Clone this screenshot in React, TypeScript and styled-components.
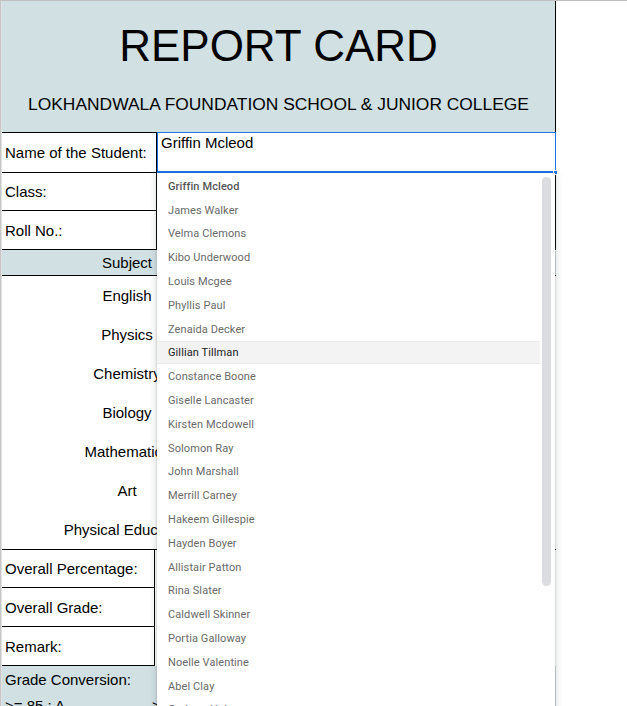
import React from "react";
import styled, { createGlobalStyle } from "styled-components";

const GlobalStyle = createGlobalStyle`
  html, body {
    margin: 0;
    padding: 0;
    background: #ffffff;
    overflow: hidden;
  }
  * {
    box-sizing: border-box;
  }
`;

const students = [
  "Griffin Mcleod",
  "James Walker",
  "Velma Clemons",
  "Kibo Underwood",
  "Louis Mcgee",
  "Phyllis Paul",
  "Zenaida Decker",
  "Gillian Tillman",
  "Constance Boone",
  "Giselle Lancaster",
  "Kirsten Mcdowell",
  "Solomon Ray",
  "John Marshall",
  "Merrill Carney",
  "Hakeem Gillespie",
  "Hayden Boyer",
  "Allistair Patton",
  "Rina Slater",
  "Caldwell Skinner",
  "Portia Galloway",
  "Noelle Valentine",
  "Abel Clay",
  "Graham Hale",
];

const subjects = [
  "English",
  "Physics",
  "Chemistry",
  "Biology",
  "Mathematics",
  "Art",
  "Physical Education",
];

const teal = "#d0e0e3";

const Page = styled.div`
  width: 627px;
  height: 706px;
  overflow: hidden;
  display: flex;
  align-items: flex-start;
  border-top: 1px solid #c0c0c0;
  font-family: "Liberation Sans", Arial, sans-serif;
  color: #000;
`;

const Gutter = styled.div`
  flex: none;
  align-self: stretch;
  width: 2px;
  background: #c6c6c6;
  border-right: 1px solid #e2e2e2;
`;

const Sheet = styled.div`
  position: relative;
  flex: none;
  width: 554px;
`;

const Header = styled.div`
  height: 131px;
  background: ${teal};
  border-right: 1px solid #000;
  display: flex;
  flex-direction: column;
  align-items: center;
  padding-top: 20px;
`;

const Title = styled.div`
  font-size: 44px;
  line-height: 50px;
  white-space: nowrap;
`;

const Subtitle = styled.div`
  margin-top: 24px;
  font-size: 17.4px;
  line-height: 19px;
  white-space: nowrap;
`;

const InfoRow = styled.div<{ $h: number; $first?: boolean }>`
  display: grid;
  grid-template-columns: 155px 399px;
  height: ${(p) => p.$h}px;
  border-top: ${(p) => (p.$first ? "1px solid #000" : "none")};
`;

const LabelCell = styled.div`
  display: flex;
  align-items: center;
  padding-left: 3px;
  font-size: 15px;
  white-space: nowrap;
  overflow: hidden;
  border-right: 1px solid #000;
  border-bottom: 1px solid #000;
`;

const ValueCell = styled.div`
  border-bottom: 1px solid #000;
  border-right: 1px solid #000;
`;

const SelectedCell = styled.div`
  position: relative;
  margin-top: -1px;
  border: 1px solid #1a73e8;
  border-bottom-width: 2px;
  padding: 1px 0 0 3px;
  font-size: 15px;
  line-height: 18px;
  background: #fff;
`;

const Handle = styled.span`
  position: absolute;
  right: -3px;
  bottom: -4px;
  width: 5px;
  height: 5px;
  background: #1a73e8;
  border: 1px solid #fff;
`;

const SubjectHead = styled.div`
  height: 26px;
  background: ${teal};
  border-bottom: 1px solid #000;
  display: grid;
  grid-template-columns: 250px 1fr;
  font-size: 15px;
  align-items: center;
  text-align: center;
`;

const SubjectRow = styled.div`
  height: 39px;
  display: grid;
  grid-template-columns: 250px 1fr;
  align-items: center;
  text-align: center;
  font-size: 15px;
  white-space: nowrap;
  padding-bottom: 1px;
`;

const SummaryRow = styled.div<{ $first?: boolean }>`
  display: grid;
  grid-template-columns: 153px 1fr;
  height: 39px;
  border-top: ${(p) => (p.$first ? "1px solid #000" : "none")};
`;

const GradeRow = styled.div<{ $h: number }>`
  height: ${(p) => p.$h}px;
  background: ${teal};
  display: grid;
  grid-template-columns: 147px 1fr;
  align-items: center;
  font-size: 15px;
  white-space: nowrap;
  padding-left: 3px;
`;

const Dropdown = styled.div`
  position: absolute;
  left: 155px;
  top: 172px;
  width: 398px;
  height: 560px;
  background: #fff;
  padding-top: 1px;
  box-shadow: 0 2px 6px 2px rgba(60, 64, 67, 0.15),
    0 1px 2px rgba(60, 64, 67, 0.3);
  font-family: Roboto, "Noto Sans", sans-serif;
  overflow: hidden;
`;

const Option = styled.div<{ $active?: boolean; $current?: boolean }>`
  width: 383px;
  height: 23.8px;
  display: flex;
  align-items: center;
  padding-left: 11px;
  padding-top: 1px;
  font-size: 11px;
  letter-spacing: 0.1px;
  white-space: nowrap;
  color: ${(p) => (p.$active ? "#202124" : p.$current ? "#555" : "#6a6a6a")};
  font-weight: ${(p) => (p.$current ? 500 : 400)};
  background: ${(p) => (p.$active ? "#f3f3f3" : "transparent")};
  box-shadow: ${(p) =>
    p.$active ? "inset 0 1px 0 #e9e9e9, inset 0 -1px 0 #e9e9e9" : "none"};
`;

const Scrollbar = styled.div`
  position: absolute;
  right: 4px;
  top: 4px;
  width: 9px;
  height: 409px;
  border-radius: 5px;
  background: #dadce0;
`;

export default function App() {
  return (
    <>
      <GlobalStyle />
      <Page>
        <Gutter />
        <Sheet>
          <Header>
            <Title>REPORT CARD</Title>
            <Subtitle>LOKHANDWALA FOUNDATION SCHOOL &amp; JUNIOR COLLEGE</Subtitle>
          </Header>

          <InfoRow $h={41} $first>
            <LabelCell>Name of the Student:</LabelCell>
            <SelectedCell>
              Griffin Mcleod
              <Handle />
            </SelectedCell>
          </InfoRow>
          <InfoRow $h={38}>
            <LabelCell>Class:</LabelCell>
            <ValueCell />
          </InfoRow>
          <InfoRow $h={39}>
            <LabelCell>Roll No.:</LabelCell>
            <ValueCell />
          </InfoRow>

          <SubjectHead>
            <span>Subject</span>
            <span />
          </SubjectHead>
          {subjects.map((s) => (
            <SubjectRow key={s}>
              <span>{s}</span>
              <span />
            </SubjectRow>
          ))}

          <SummaryRow $first>
            <LabelCell>Overall Percentage:</LabelCell>
            <span />
          </SummaryRow>
          <SummaryRow>
            <LabelCell>Overall Grade:</LabelCell>
            <span />
          </SummaryRow>
          <SummaryRow>
            <LabelCell>Remark:</LabelCell>
            <span />
          </SummaryRow>

          <GradeRow $h={27}>
            <span>Grade Conversion:</span>
            <span />
          </GradeRow>
          <GradeRow $h={25}>
            <span>&gt;= 85 : A</span>
            <span>&gt;= 70 : B</span>
          </GradeRow>

          <Dropdown>
            {students.map((name, i) => (
              <Option key={name} $current={i === 0} $active={i === 7}>
                {name}
              </Option>
            ))}
            <Scrollbar />
          </Dropdown>
        </Sheet>
      </Page>
    </>
  );
}
